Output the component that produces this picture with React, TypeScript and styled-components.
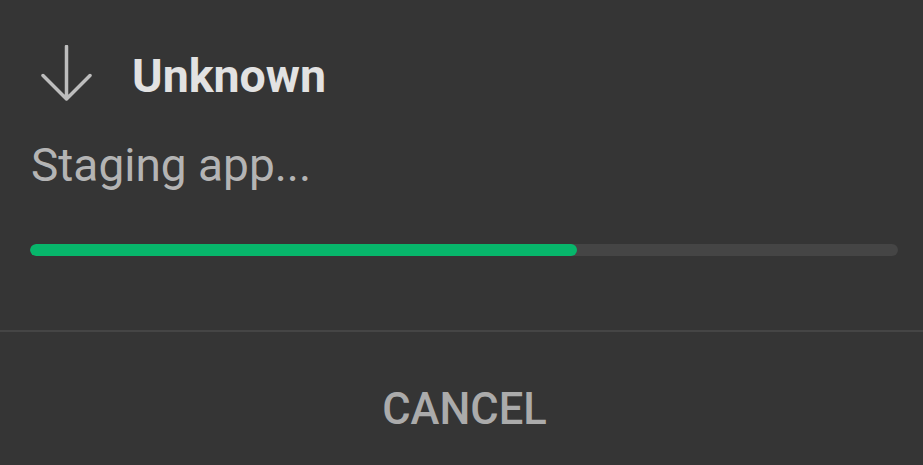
import React from "react";
import styled, { createGlobalStyle } from "styled-components";

const GlobalStyle = createGlobalStyle`
  html, body {
    margin: 0;
    padding: 0;
    background: #353535;
  }
  body {
    font-family: Roboto, "Liberation Sans", Arial, sans-serif;
  }
`;

const Dialog = styled.div`
  width: 923px;
  height: 465px;
  background: #353535;
  display: flex;
  flex-direction: column;
  overflow: hidden;
`;

const Content = styled.div`
  display: flex;
  flex-direction: column;
  padding: 45px 25px 0 30px;
`;

const Header = styled.div`
  display: flex;
  align-items: flex-start;
`;

const Title = styled.div`
  margin: 9px 0 0 38px;
  font-size: 46.5px;
  line-height: 45px;
  font-weight: 700;
  color: #e2e2e2;
`;

const Message = styled.div`
  margin-top: 42px;
  font-size: 46px;
  line-height: 45px;
  font-weight: 400;
  color: #b4b4b4;
  padding-left: 1px;
`;

const Track = styled.div`
  margin-top: 56px;
  height: 12px;
  border-radius: 6px;
  background: #454545;
  overflow: hidden;
`;

const Fill = styled.div`
  height: 100%;
  border-radius: 6px;
  background: #07b66b;
`;

const Divider = styled.div`
  margin-top: 74px;
  height: 2px;
  background: #454545;
`;

const Actions = styled.div`
  display: flex;
  justify-content: center;
  padding-top: 57px;
`;

const CancelButton = styled.button`
  border: none;
  background: transparent;
  padding: 0;
  font-family: Roboto, "Liberation Sans", Arial, sans-serif;
  font-size: 43.5px;
  line-height: 42px;
  font-weight: 500;
  color: #ababab;
  margin-left: 6px;
`;

const DownArrow = () => (
  <svg width="64" height="56" viewBox="0 0 64 56" fill="none">
    <path
      d="M36.5 1.5 V54 M13 30.5 L36.5 54 L60 30.5"
      stroke="#bdbdbd"
      strokeWidth="3.5"
      strokeLinecap="round"
      strokeLinejoin="round"
    />
  </svg>
);

export default function App() {
  const progress = 0.63;
  return (
    <>
      <GlobalStyle />
      <Dialog>
        <Content>
          <Header>
            <DownArrow />
            <Title>Unknown</Title>
          </Header>
          <Message>Staging app...</Message>
          <Track>
            <Fill style={{ width: `${progress * 100}%` }} />
          </Track>
        </Content>
        <Divider />
        <Actions>
          <CancelButton>CANCEL</CancelButton>
        </Actions>
      </Dialog>
    </>
  );
}
